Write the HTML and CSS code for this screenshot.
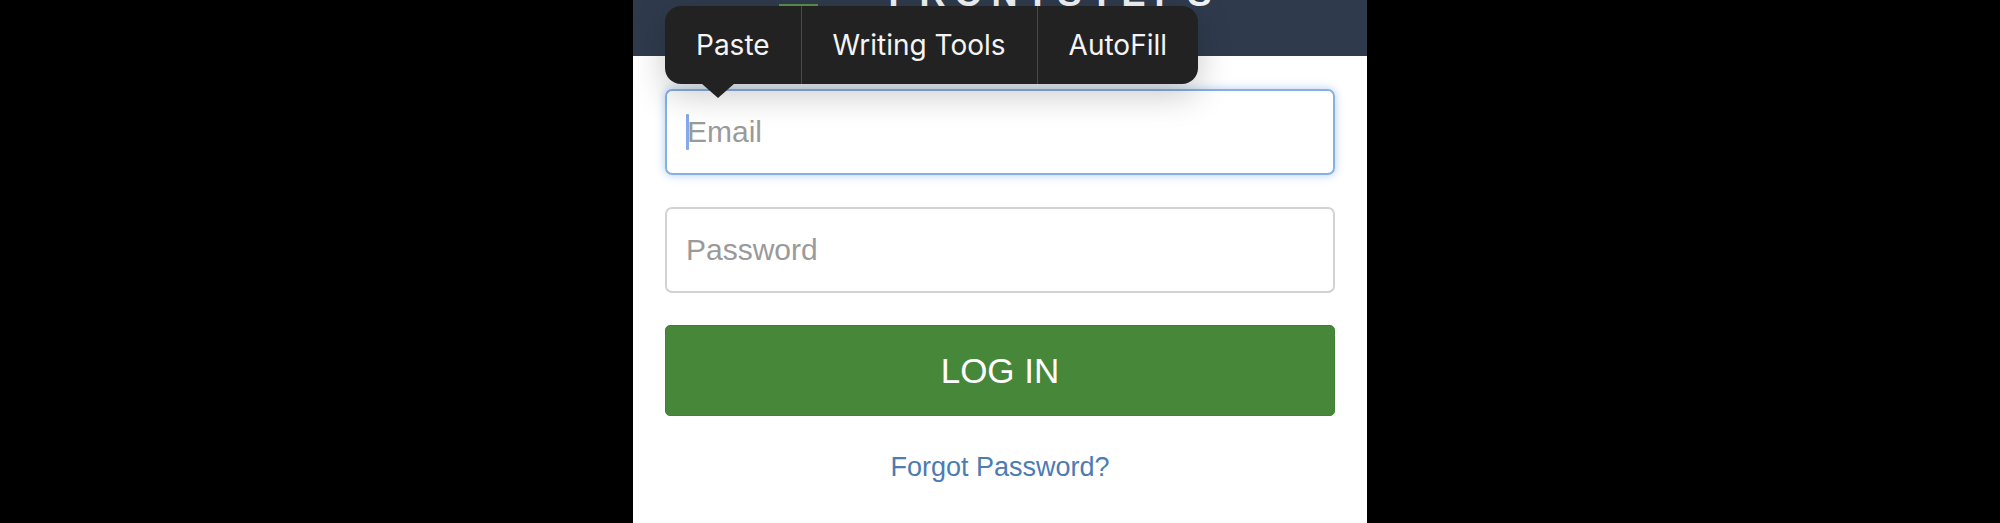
FILE: index.html
```html
<!DOCTYPE html>
<html lang="en">
<head>
<meta charset="utf-8">
<title>Log in</title>
<link rel="stylesheet" href="styles.css">
</head>
<body>
<div class="stage">
  <main class="panel">
    <header class="topbar">
      <div class="logo">
        <span class="logo-mark"></span>
        <span class="logo-text">FRONTSTEPS</span>
      </div>
    </header>
    <form class="form">
      <div class="field field-focus">
        <span class="caret"></span><span class="placeholder">Email</span>
      </div>
      <div class="field">
        <span class="placeholder">Password</span>
      </div>
      <button type="button" class="btn-login">LOG IN</button>
      <a class="forgot" href="#">Forgot Password?</a>
    </form>
    <div class="edit-menu">
      <span class="menu-item">Paste</span>
      <span class="menu-item">Writing Tools</span>
      <span class="menu-item">AutoFill</span>
    </div>
    <div class="menu-arrow"></div>
  </main>
</div>
</body>
</html>
```
FILE: styles.css
```css
html, body {
  margin: 0;
  padding: 0;
  background: #000;
  height: 523px;
  overflow: hidden;
}

.stage {
  display: flex;
  justify-content: center;
  height: 523px;
}

.panel {
  position: relative;
  width: 734px;
  height: 523px;
  background: #fff;
  display: flex;
  flex-direction: column;
}

.topbar {
  height: 56px;
  background: #2f3b4d;
  overflow: hidden;
  display: flex;
  justify-content: center;
  align-items: flex-start;
}

.logo {
  display: flex;
  align-items: flex-end;
  height: 36px;
  margin-top: -24px;
}

.logo-mark {
  width: 39px;
  height: 2px;
  background: #5d8f4c;
  margin-bottom: 6px;
  margin-right: 70px;
}

.logo-text {
  font-family: "Liberation Sans", Arial, sans-serif;
  font-size: 36px;
  line-height: 36px;
  letter-spacing: 9px;
  font-weight: 600;
  color: #f2f4f6;
}

.form {
  display: flex;
  flex-direction: column;
  padding: 33px 32px 0;
  gap: 32px;
}

.field {
  box-sizing: border-box;
  height: 86px;
  border: 2px solid #d2d2d2;
  border-radius: 7px;
  display: flex;
  align-items: center;
  padding-left: 19px;
  font-family: "Liberation Sans", Arial, sans-serif;
  font-size: 30px;
  color: #9a9a9a;
}

.field-focus {
  border-color: #86b0e4;
  box-shadow: 0 0 10px rgba(110, 165, 230, 0.55);
}

.caret {
  display: inline-block;
  width: 3px;
  height: 36px;
  background: #86a8ee;
  border-radius: 1px;
  margin-right: -2px;
}

.btn-login {
  height: 91px;
  border: 1px solid #437f37;
  border-radius: 5px;
  background: #47873a;
  color: #fff;
  font-family: "Liberation Sans", Arial, sans-serif;
  font-size: 35px;
  padding: 0;
}

.forgot {
  align-self: center;
  margin-top: 3px;
  font-family: "Liberation Sans", Arial, sans-serif;
  font-size: 27px;
  line-height: 32px;
  color: #4d7bb3;
  text-decoration: none;
}

.edit-menu {
  position: absolute;
  left: 32px;
  top: 6px;
  height: 78px;
  display: flex;
  background: #222222;
  border-radius: 16px;
  box-shadow: 0 10px 34px rgba(0, 0, 0, 0.22);
}

.menu-item {
  display: flex;
  align-items: center;
  padding: 0 31px;
  font-family: Inter, "Noto Sans", sans-serif;
  font-size: 28px;
  color: #f4f4f4;
}

.menu-item + .menu-item {
  border-left: 1px solid #4a4a4a;
}

.menu-arrow {
  position: absolute;
  left: 68px;
  top: 83px;
  width: 0;
  height: 0;
  border-left: 17px solid transparent;
  border-right: 17px solid transparent;
  border-top: 15px solid #222222;
}
```
